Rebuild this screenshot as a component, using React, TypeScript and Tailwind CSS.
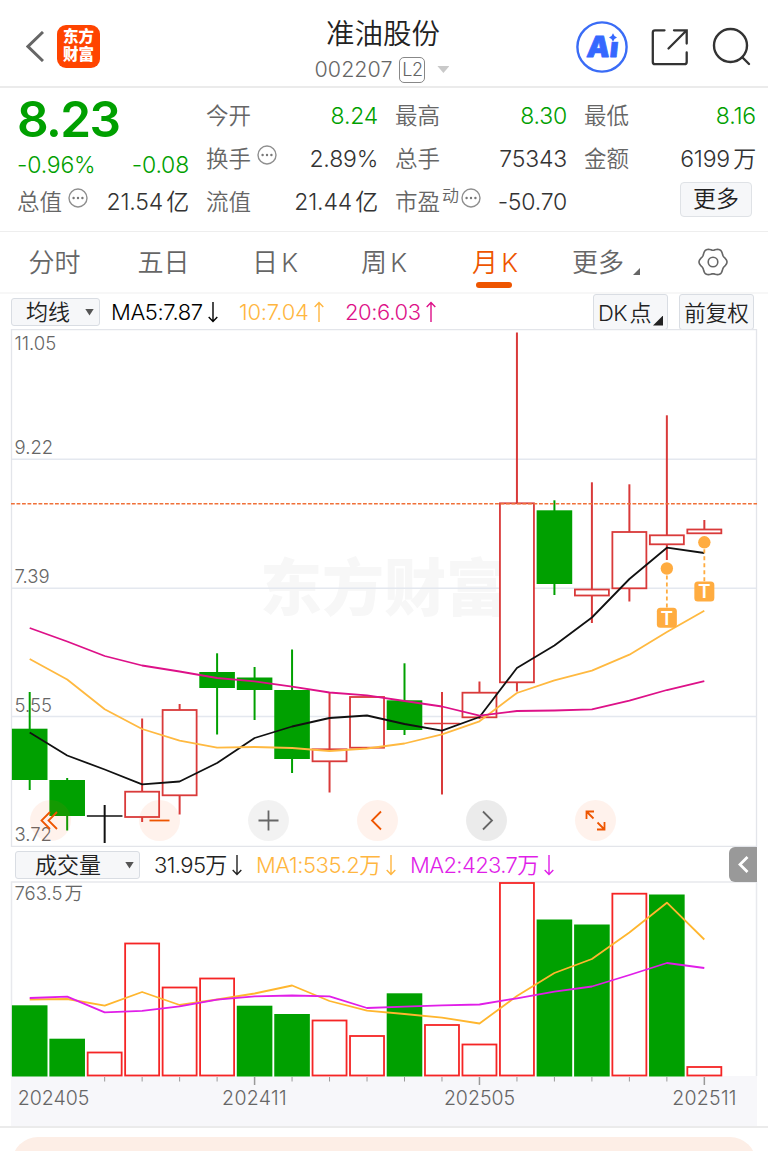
import type { ReactNode } from 'react'
import clsx from 'clsx'

const UP = '#d93a3a'
const DOWN = '#00a000'
const STEP = 37.48
const FIRST_X = 29.7

const cx = (i: number) => FIRST_X + i * STEP
const toPoints = (ys: number[]) => ys.map((y, i) => `${cx(i).toFixed(1)},${y}`).join(' ')

type Kind = 'up' | 'down' | 'flat'

// [kind, high, low, body top, body bottom]
const candles: [Kind, number, number, number, number][] = [
  ['down', 692, 790, 728.7, 780],
  ['down', 778, 830.5, 780, 816],
  ['flat', 805, 843, 816, 816],
  ['up', 718.5, 822, 791.7, 817],
  ['up', 704, 814.5, 710, 795.3],
  ['down', 653.3, 734.5, 672, 688],
  ['down', 667, 720, 677.5, 690],
  ['down', 649.5, 773, 690, 759],
  ['up', 693, 792.5, 749.3, 761.3],
  ['up', 697, 748, 697, 747.7],
  ['down', 663.3, 735, 700.3, 730],
  ['up', 692, 794.5, 723.5, 723.5],
  ['up', 681.5, 719, 692.7, 717.3],
  ['up', 332.5, 691.5, 503.3, 682.3],
  ['down', 500.3, 595, 510.3, 584],
  ['up', 482.3, 623, 589.5, 595.5],
  ['up', 484.3, 601.5, 532, 588.3],
  ['up', 415.3, 560, 535.3, 544.3],
  ['up', 520, 533, 529.5, 533.3],
]

const ma5 = [732.5, 755.5, 769.5, 784.3, 781.5, 763, 738, 726.5, 718, 715.5, 724, 730.7, 717, 668, 645.5, 617.5, 579, 547.7, 553]
const ma10 = [659, 679.5, 709.3, 729, 740.7, 747.7, 747, 748, 751, 748.5, 743.5, 734.3, 721.3, 693, 680.3, 670.7, 654.7, 632, 610.7]
const ma20 = [628, 641.5, 656, 665.5, 671.5, 678, 681.3, 686.7, 692.5, 695.3, 701, 706.5, 715.7, 711, 710.5, 709.3, 700.7, 690, 681]

const volumes: [Kind, number][] = [
  ['down', 1005.3], ['down', 1038.7], ['up', 1052.5], ['up', 943.5], ['up', 987.5],
  ['up', 978.5], ['down', 1005.7], ['down', 1014], ['up', 1020.5], ['up', 1036],
  ['down', 993.3], ['up', 1025], ['up', 1044.5], ['up', 883], ['down', 919.5],
  ['down', 924.5], ['up', 893.7], ['down', 894.5], ['up', 1067],
]
const volMa1 = [999.5, 999, 1005.7, 992, 1005, 999.5, 993.5, 985.5, 1001, 1010.7, 1014, 1017.7, 1023.5, 996, 973, 959, 932.5, 902.7, 939.5]
const volMa2 = [998, 996.7, 1012.3, 1010.8, 1006.3, 999.7, 996.3, 995.5, 996.3, 1008, 1006.7, 1005.3, 1004.5, 998.3, 991.7, 986.5, 975, 963, 968]

// six-lobed outline for the settings icon
const gear = Array.from({ length: 72 }, (_, i) => {
  const a = (i * 5 * Math.PI) / 180
  const r = 12.9 + 1.1 * Math.cos(6 * a)
  return `${(15 + r * Math.cos(a)).toFixed(2)},${(15 + r * Math.sin(a)).toFixed(2)}`
}).join(' ')

function Dots() {
  return (
    <svg className="size-5 shrink-0" viewBox="0 0 20 20" fill="none" stroke="#8f8f8f" strokeWidth="1.4">
      <circle cx="10" cy="10" r="9" />
      <g fill="#777" stroke="none">
        <circle cx="5.6" cy="10" r="1.2" />
        <circle cx="10" cy="10" r="1.2" />
        <circle cx="14.4" cy="10" r="1.2" />
      </g>
    </svg>
  )
}

function Header() {
  return (
    <header className="h-[88px] border-b-2 border-[#ebebeb] grid grid-cols-[1fr_auto_1fr] items-center">
      <div className="flex items-center pl-[26px] pt-[7px]">
        <svg className="w-[18px] h-[31px]" viewBox="0 0 18 31" fill="none" stroke="#666" strokeWidth="3">
          <path d="M17 1 2 15.5 17 30" />
        </svg>
        <div className="ml-[13px] size-[43px] rounded-[9px] bg-[#ff4400] text-white text-[15.5px] leading-[18px] font-black text-center pt-[3px]">
          东方<br />财富
        </div>
      </div>
      <div className="flex flex-col items-center pt-[14px]">
        <h1 className="text-[28.5px] leading-[34px] text-[#222] -ml-[2px]">准油股份</h1>
        <div className="flex items-center h-7 mt-[5px] -ml-1 text-[21.5px] text-[#666]">
          <span>002207</span>
          <span className="ml-[7px] h-[26px] w-[26px] border-[1.5px] border-[#888] rounded-[5px] text-[18px] leading-[24px] text-center tracking-[-0.5px]">L2</span>
          <i className="ml-3 w-3 h-[7px] bg-[#c9c9c9] [clip-path:polygon(0_0,100%_0,50%_100%)]" />
        </div>
      </div>
      <div className="flex items-center justify-end pr-[17px] pt-[7px]">
        <svg className="size-[52px]" viewBox="0 0 52 52">
          <circle cx="26" cy="26" r="24.6" fill="none" stroke="#3a6cf6" strokeWidth="2.4" />
          <text transform="translate(10 36) skewX(-6)" fontSize="29" fontWeight="900" fill="#3568ff" stroke="#3568ff" strokeWidth="0.8" strokeLinejoin="round">Ai</text>
          <path fill="#fff" d="M32 11h12v9.8H32Z" />
          <path fill="#3568ff" d="M37 12.2q1 3.4 4 4.3-3 1-4 4.2-1-3.2-4-4.2 3-.9 4-4.3Z" />
        </svg>
        <svg className="ml-[23px] mr-px w-[38px] h-[38px]" viewBox="0 0 38 38" fill="none" stroke="#333" strokeWidth="2.3" strokeLinecap="round">
          <path d="M13.5 2.3H4Q1.8 2.3 1.8 4.500V34q0 2.2 2.2 2.2h29.5q2.2 0 2.2-2.2V24.500M23 2.3h12.700V15.500M35.2 2.8 17.500 20.500" />
        </svg>
        <svg className="ml-[22px] w-[39px] h-[39px]" viewBox="0 0 39 39" fill="none" stroke="#333" strokeWidth="2.4" strokeLinecap="round">
          <circle cx="18.5" cy="18.5" r="16.5" />
          <path d="m30.5 30.5 6.5 6.5" />
        </svg>
      </div>
    </header>
  )
}

function Stat({ label, value, green, children }: { label: string; value: string; green?: boolean; children?: ReactNode }) {
  return (
    <div className="flex items-center justify-between h-[43px] whitespace-nowrap">
      <div className="flex items-center text-[22.5px] leading-[30px] -mt-px text-[#666]">
        {label}
        {children}
      </div>
      <span className={clsx('text-[23px] tracking-[-0.2px] [word-spacing:-3px]', green ? 'text-[#00a000]' : 'text-[#333]')}>{value}</span>
    </div>
  )
}

function Quote() {
  return (
    <section className="h-[144px] pt-[7px] pl-[17px] pr-3 grid grid-cols-4 gap-x-[17px] border-b border-[#eee]">
      <div>
        <div className="h-12 text-[49.5px] leading-[48px] font-semibold tracking-[-1.6px] text-[#00a000]">8.23</div>
        <div className="flex justify-between items-center h-[38px] pt-[11px] pb-1 text-[23px] tracking-[-0.2px] text-[#00a000]">
          <span>-0.96%</span>
          <span>-0.08</span>
        </div>
        <Stat label="总值" value="21.54 亿">
          <span className="ml-1.5 -mt-2"><Dots /></span>
        </Stat>
      </div>
      <div>
        <Stat label="今开" value="8.24" green />
        <Stat label="换手" value="2.89%">
          <span className="ml-1.5 -mt-2"><Dots /></span>
        </Stat>
        <Stat label="流值" value="21.44 亿" />
      </div>
      <div>
        <Stat label="最高" value="8.30" green />
        <Stat label="总手" value="75343" />
        <Stat label="市盈" value="-50.70">
          <span className="ml-0.5 -mt-3 text-[17px]">动</span>
          <span className="ml-0.5 -mt-2"><Dots /></span>
        </Stat>
      </div>
      <div>
        <Stat label="最低" value="8.16" green />
        <Stat label="金额" value="6199 万" />
        <button className="block ml-auto mr-1 mt-[1px] w-[72px] h-[35px] rounded-[4px] border border-[#dfe2e6] bg-[#f6f7f9] text-[23px] leading-[33px] text-[#222]">更多</button>
      </div>
    </section>
  )
}

const tabs = [
  { label: '分时', width: 'w-[109px]' },
  { label: '五日', width: 'w-[109px]' },
  { label: '日 K', width: 'w-[114px]' },
  { label: '周 K', width: 'w-[104px]' },
  { label: '月 K', width: 'w-[118px]' },
  { label: '更多', width: 'w-[88px]' },
]

function Tabs() {
  return (
    <nav className="h-[62px] flex border-b-2 border-[#f7f7f7] text-[26px] text-[#666]">
      {tabs.map((t, i) => (
        <button key={t.label} className={clsx('relative shrink-0 whitespace-nowrap pt-px [word-spacing:-4px]', t.width, i === 4 && 'text-[#ee5500]')}>
          {t.label}
          {i === 4 && <i className="absolute left-1/2 -ml-[19px] bottom-[4px] w-[36px] h-1.5 rounded-full bg-[#ee5500]" />}
          {i === 5 && <i className="absolute right-[2px] bottom-[17px] size-[7px] bg-[#666] [clip-path:polygon(100%_0,100%_100%,0_100%)]" />}
        </button>
      ))}
      <button className="ml-[56px]">
        <svg className="size-[30px]" viewBox="0 0 30 30" fill="none" stroke="#666" strokeWidth="1.6" strokeLinejoin="round">
          <polygon points={gear} />
          <circle cx="15" cy="15" r="4.8" />
        </svg>
      </button>
    </nav>
  )
}

function Arrow({ up }: { up?: boolean }) {
  return (
    <svg className={clsx('w-[10px] h-[22px] ml-[5px] -mt-0.5 shrink-0', up && 'rotate-180')} viewBox="0 0 10 22" fill="none" stroke="currentColor" strokeWidth="1.4">
      <path d="M5 1v19.500M.7 16 5 20.500 9.300 16" />
    </svg>
  )
}

function Picker({ children, className }: { children: ReactNode; className: string }) {
  return (
    <button className={clsx('relative h-7 shrink-0 rounded-[3px] border border-[#d9dde3] bg-[#f6f7f9] text-[#222] text-[22px] leading-[26px] text-left', className)}>
      {children}
      <i className="absolute right-[5px] top-[10px] w-[9px] h-[7px] bg-[#555] [clip-path:polygon(0_0,100%_0,50%_100%)]" />
    </button>
  )
}

function IndicatorBar() {
  return (
    <div className="h-[35px] flex items-center pl-[11px] pr-[14px] text-[22px] whitespace-nowrap">
      <Picker className="w-[89px] pl-[14px]">均线</Picker>
      <div className="flex items-center w-[128px] ml-[11px] pt-0.5 tracking-[-0.4px] text-black">MA5:7.87<Arrow /></div>
      <div className="flex items-center w-[106px] pt-0.5 tracking-[-0.2px] text-[#ffb640]">10:7.04<Arrow up /></div>
      <div className="flex items-center pt-0.5 tracking-[-0.4px] text-[#dd1188]">20:6.03<Arrow up /></div>
      <button className="relative ml-auto w-[75px] h-9 rounded-[3px] border border-[#d9dde3] bg-[#f6f7f9] pl-1 pt-0.5 text-left text-[#222] tracking-[-0.6px] [word-spacing:-3px]">
        DK 点
        <i className="absolute right-1 bottom-[3px] size-[10px] bg-[#222] [clip-path:polygon(100%_0,100%_100%,0_100%)]" />
      </button>
      <button className="ml-[11px] w-[75px] h-9 rounded-[3px] border border-[#d9dde3] bg-[#f6f7f9] pt-0.5 text-[#222] text-[21.5px]">前复权</button>
    </div>
  )
}

function Candle({ i }: { i: number }) {
  const [kind, high, low, top, bottom] = candles[i]
  const x = cx(i)
  const color = kind === 'up' ? UP : kind === 'down' ? DOWN : '#111'
  return (
    <g stroke={color} strokeWidth="2">
      <path d={`M${x} ${high}V${low}`} />
      {top === bottom && <path d={`M${x - 17.8} ${top}h35.6`} strokeWidth="1.6" />}
      {kind === 'down' && <rect x={x - 17.8} y={top} width="35.6" height={bottom - top} fill={DOWN} stroke="none" />}
      {kind === 'up' && bottom > top && (
        <rect x={x - 17} y={top} width="34" height={bottom - top} fill="#fff" strokeWidth="1.8" />
      )}
    </g>
  )
}

function Signal({ i, y }: { i: number; y: number }) {
  return (
    <g transform={`translate(${cx(i)} ${y})`}>
      <path d="M0 0v40" stroke="#ffac40" strokeWidth="1.8" strokeDasharray="4 3" />
      <circle r="6.2" fill="#ffac40" />
      <rect x="-10" y="39.2" width="20" height="20" rx="3.5" fill="#ffac40" />
      <text y="56" textAnchor="middle" fontSize="19" fontWeight="600" fill="#fff">T</text>
    </g>
  )
}

const controls: { left: string; bg: string; color: string; d: string }[] = [
  { left: 'left-[30px]', bg: 'bg-[#ff5a14]/8', color: 'text-[#ee5500]', d: 'M20 12 11.5 20.5 20 29M27 12l-8.5 8.5L27 29' },
  { left: 'left-[139px]', bg: 'bg-[#ff5a14]/8', color: 'text-[#ee5500]', d: 'M10.5 20.5h20' },
  { left: 'left-[248px]', bg: 'bg-black/5', color: 'text-[#666]', d: 'M10.5 20.5h20M20.5 10.5v20' },
  { left: 'left-[357px]', bg: 'bg-[#ff5a14]/8', color: 'text-[#ee5500]', d: 'M24 11.5 15 20.5l9 9' },
  { left: 'left-[466px]', bg: 'bg-black/8', color: 'text-[#666]', d: 'm17 11.5 9 9-9 9' },
  { left: 'left-[575px]', bg: 'bg-[#ff5a14]/8', color: 'text-[#ee5500]', d: 'M11.5 19V11.5H19M11.5 11.5l7 7M29.5 22v7.5H22M29.5 29.5l-7-7' },
]

function PriceChart() {
  return (
    <div className="relative h-[518px]">
      <svg className="block w-[768px] h-[518px]" viewBox="0 329 768 518">
        <path d="M11.5 329.5H756.5V846.5H11.5Z" fill="none" stroke="#e3e5ea" strokeWidth="1.3" />
        <text x="260" y="611" fontSize="62" fontWeight="900" fill="#f7f7f7">东方财富</text>
        <path d="M12 459.3H756M12 588.3H756M12 716.5H756" stroke="#e4e8ef" strokeWidth="1.4" />
        {candles.map((_, i) => <Candle key={i} i={i} />)}
        <path d="M11 503.7H757" stroke="#f07038" strokeWidth="1.6" strokeDasharray="3.8 1.7" />
        <g fontSize="18.5" fill="#666">
          <text x="14.5" y="349.5">11.05</text>
          <text x="14.5" y="453.5">9.22</text>
          <text x="14.5" y="582.5">7.39</text>
          <text x="14.5" y="711.5">5.55</text>
          <text x="14.5" y="840.5">3.72</text>
        </g>
        <g fill="none" strokeWidth="1.8" strokeLinejoin="round">
          <polyline points={toPoints(ma5)} stroke="#111" />
          <polyline points={toPoints(ma10)} stroke="#ffb940" />
          <polyline points={toPoints(ma20)} stroke="#dd1188" />
        </g>
        <Signal i={17} y={568.5} />
        <Signal i={18} y={542.3} />
      </svg>
      {controls.map(c => (
        <button key={c.left} className={clsx('absolute bottom-[6px] size-[41px] rounded-full', c.left, c.bg, c.color)}>
          <svg viewBox="0 0 41 41" fill="none" stroke="currentColor" strokeWidth="1.8"><path d={c.d} /></svg>
        </button>
      ))}
    </div>
  )
}

function VolumeBar() {
  return (
    <div className="relative h-[35px] flex items-center pl-[15px] text-[22px] whitespace-nowrap">
      <Picker className="w-[125px] pl-[19px]">成交量</Picker>
      <div className="flex items-center w-[102px] ml-[14px] pt-0.5 tracking-[-0.6px] text-[#222]">31.95万<Arrow /></div>
      <div className="flex items-center w-[154px] pt-0.5 tracking-[-0.45px] text-[#ffb640]">MA1:535.2万<Arrow /></div>
      <div className="flex items-center pt-0.5 tracking-[-0.6px] text-[#e01ee8]">MA2:423.7万<Arrow /></div>
      <button className="absolute right-[11px] top-0 w-7 h-[35px] rounded-l-[6px] bg-[#999]">
        <svg viewBox="0 0 28 35" fill="none" stroke="#fff" strokeWidth="2.8"><path d="M18.5 10 11 17.5l7.5 7.5" /></svg>
      </button>
    </div>
  )
}

function VolumeChart() {
  return (
    <svg className="block w-[768px] h-[245px]" viewBox="0 881 768 245">
      <path d="M11.5 1076V882H756.5V1076" fill="none" stroke="#e8e9ed" strokeWidth="1.5" />
      <rect x="11" y="1076" width="746" height="50" fill="#f7f7fa" />
      <text x="14.5" y="900" fontSize="18.5" fill="#666" className="[word-spacing:-3px]">763.5 万</text>
      {volumes.map(([kind, top], i) =>
        kind === 'down' ? (
          <rect key={i} x={cx(i) - 17.8} y={top} width="35.6" height={1076.5 - top} fill={DOWN} />
        ) : (
          <rect key={i} x={cx(i) - 17} y={top} width="34" height={1075.5 - top} fill="#fff" stroke="#f52525" strokeWidth="1.8" />
        )
      )}
      <g fill="none" strokeWidth="1.8" strokeLinejoin="round">
        <polyline points={toPoints(volMa1)} stroke="#ffb62e" />
        <polyline points={toPoints(volMa2)} stroke="#e01ee8" />
      </g>
      {volumes.map((_, i) => i > 1 && (
        <path key={i} d={`M${cx(i)} 1077v${i % 6 === 0 ? 8 : 4.5}`} stroke="#999" strokeWidth={i % 6 === 0 ? 1.5 : 1} />
      ))}
      <g fontSize="19.5" fill="#666" textAnchor="middle">
        <text x="53.5" y="1104.5">202405</text>
        <text x="254.5" y="1104.5" letterSpacing="0.3">202411</text>
        <text x="479.5" y="1104.5">202505</text>
        <text x="704.5" y="1104.5" letterSpacing="0.3">202511</text>
      </g>
    </svg>
  )
}

export default function App() {
  return (
    <main className="w-[768px] h-[1151px] overflow-hidden bg-white font-[350] font-['Inter','Noto_Sans_CJK_SC',sans-serif]">
      <Header />
      <Quote />
      <Tabs />
      <IndicatorBar />
      <PriceChart />
      <VolumeBar />
      <div className="-mt-px">
        <VolumeChart />
      </div>
      <div className="border-t-2 border-[#ebebeb] pt-[9px] px-3">
        <div className="h-16 rounded-[26px] bg-[#fdeee6]" />
      </div>
    </main>
  )
}
